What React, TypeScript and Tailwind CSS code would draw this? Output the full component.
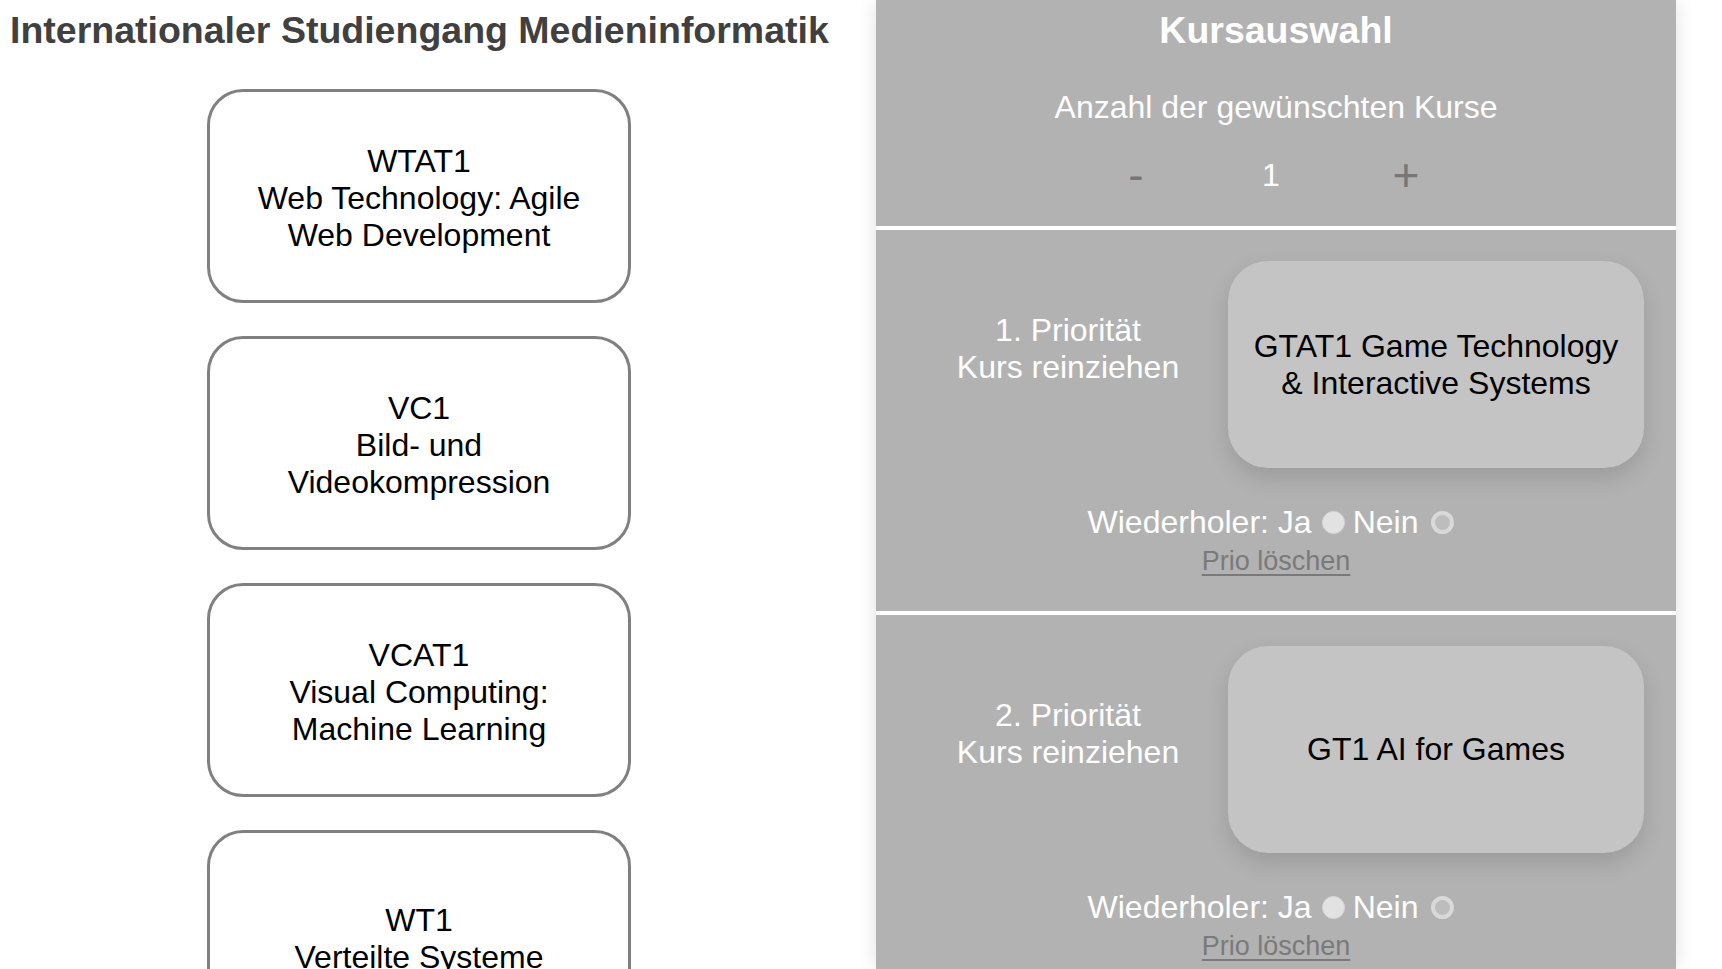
import { useState } from "react";

type Course = { code: string; lines: string[] };

const courses: Course[] = [
  { code: "WTAT1", lines: ["Web Technology: Agile", "Web Development"] },
  { code: "VC1", lines: ["Bild- und", "Videokompression"] },
  { code: "VCAT1", lines: ["Visual Computing:", "Machine Learning"] },
  { code: "WT1", lines: ["Verteilte Systeme"] },
  { code: "GT1", lines: ["AI for Games"] }
];

const priorities = [
  { rank: 1, course: ["GTAT1 Game Technology", "& Interactive Systems"] },
  { rank: 2, course: ["GT1 AI for Games"] }
];

function CourseCard({ course }: { course: Course }) {
  return (
    <div className="flex h-[214px] w-[424px] shrink-0 flex-col items-center justify-center rounded-[36px] border-[3px] border-[#808080] bg-white px-6 pt-[4px] text-center text-[32px] leading-[37px] text-black">
      <span>{course.code}</span>
      {course.lines.map((line) => (
        <span key={line}>{line}</span>
      ))}
    </div>
  );
}

function Radio({ checked }: { checked: boolean }) {
  if (checked) {
    return (
      <span className="mr-[8px] ml-[10px] inline-block h-[23px] w-[23px] rounded-full border border-[#d6d6d6] bg-[#e2e2e2] align-[-1px]" />
    );
  }
  return (
    <span className="mr-[10px] ml-[13px] inline-block h-[23px] w-[23px] rounded-full border-[4px] border-[#d9d9d9] bg-[#bdbdbd] align-[-1px]" />
  );
}

function PrioritySection({ rank, course }: { rank: number; course: string[] }) {
  return (
    <section className="flex flex-col items-center bg-[#b2b2b2] px-8 pt-[31px] pb-[31px]">
      <div className="flex w-full items-center">
        <div className="flex w-[320px] flex-col items-center pb-[32px] text-center text-white">
          <span>{rank}. Priorität</span>
          <span>Kurs reinziehen</span>
        </div>
        <div className="flex h-[207px] w-[416px] flex-col items-center justify-center rounded-[40px] bg-[#c4c4c4] text-center text-black shadow-[0_10px_22px_rgba(0,0,0,0.13)]">
          {course.map((line) => (
            <span key={line}>{line}</span>
          ))}
        </div>
      </div>
      <div className="mt-[36px] text-white">
        Wiederholer: Ja
        <Radio checked />
        Nein
        <Radio checked={false} />
      </div>
      <a className="mt-[2px] cursor-pointer text-[27px] text-[#7a7a7a] underline decoration-[1.5px] underline-offset-[4px]">
        Prio löschen
      </a>
    </section>
  );
}

export default function App() {
  const [count, setCount] = useState(1);

  return (
    <div className="flex h-[969px] w-full overflow-hidden bg-white font-['Liberation_Sans',Arial,sans-serif]">
      <div className="flex w-[876px] shrink-0 flex-col">
        <h1 className="mt-2 pl-[10px] text-[37.5px] leading-[44px] font-bold text-[#404040]">
          Internationaler Studiengang Medieninformatik
        </h1>
        <div className="mt-[37px] ml-[207px] flex flex-col gap-[33px]">
          {courses.map((course) => (
            <CourseCard course={course} key={course.code} />
          ))}
        </div>
      </div>

      <aside className="flex w-[800px] shrink-0 flex-col gap-[4px] bg-white text-[32px] leading-[37px] shadow-[0_0_18px_rgba(0,0,0,0.12)]">
        <section className="flex flex-col items-center bg-[#b2b2b2] pt-2 pb-[32px] text-white">
          <h2 className="text-[37.5px] leading-[44px] font-bold">Kursauswahl</h2>
          <p className="mt-[37px]">Anzahl der gewünschten Kurse</p>
          <div className="mt-[31px] mr-[10px] flex h-[37px] items-center">
            <button
              className="w-[135px] text-center text-[46px] leading-[37px] text-[#777777]"
              onClick={() => setCount((c) => Math.max(1, c - 1))}
              type="button"
            >
              -
            </button>
            <span className="w-[135px] text-center">{count}</span>
            <button
              className="w-[135px] text-center text-[46px] leading-[37px] text-[#777777]"
              onClick={() => setCount((c) => c + 1)}
              type="button"
            >
              +
            </button>
          </div>
        </section>
        {priorities.map((p) => (
          <PrioritySection course={p.course} key={p.rank} rank={p.rank} />
        ))}
      </aside>
    </div>
  );
}
